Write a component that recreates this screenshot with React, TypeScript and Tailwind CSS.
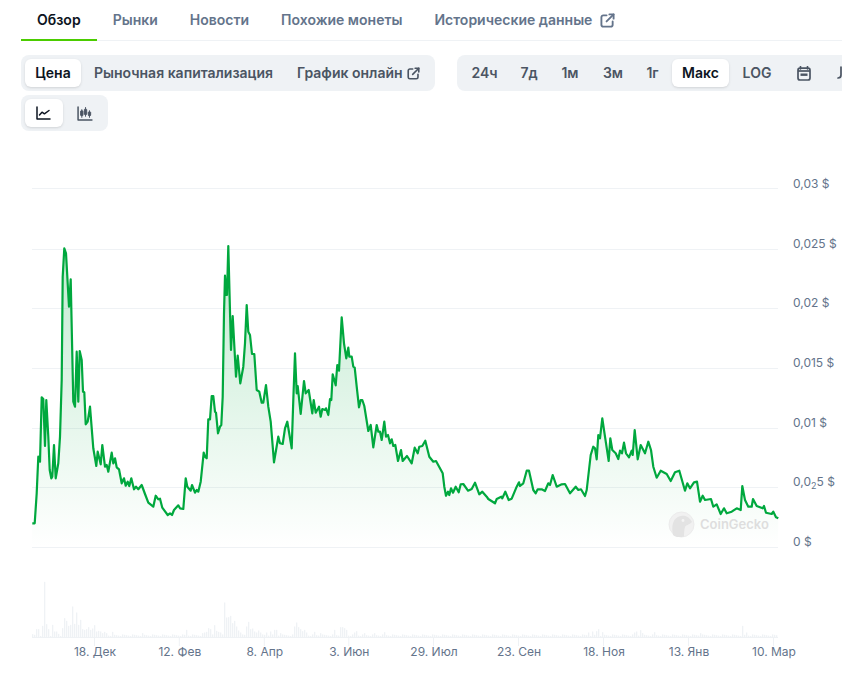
import React from 'react'

// points traced from the chart, grouped by the part of the picture they came from
const z3: number[][] = [[97,880],[104,880],[110,790],[115,680],[120,695],[125,502],[130,507],[135,648],[139,510],[145,620],[149,720],[154,745],[157,740],[162,645],[167,745],[175,700],[180,620],[185,450],[188,140],[193,55],[198,70],[207,230],[212,148],[220,515],[225,530],[230,365],[235,515],[239,363],[245,390],[249,485],[253,487],[257,583],[263,575],[270,530],[280,655],[289,708],[293,665],[302,703],[307,645],[315,710],[320,705],[325,725],[335,668],[340,700],[345,685],[350,712],[357,718],[365,760],[372,745],[377,767],[383,755],[388,768],[394,745],[402,778],[408,770],[415,778],[425,765],[435,792],[445,818],[460,830],[467,797],[475,808],[480,806],[487,833],[503,855],[510,850],[516,855],[522,840],[535,826],[540,835],[550,837],[557,745],[562,770],[572,782],[576,765],[585,788],[590,780],[595,785],[602,755],[611,668],[615,680],[620,685],[625,568],[630,568],[635,498],[640,498],[645,545],[648,548],[654,610],[660,590],[664,585],[668,500],[672,250],[675,137],[679,195],[681,195],[685,48],[693,360],[698,258],[708,440],[713,377],[721,460],[730,410],[735,340],[740,225],[745,305],[750,315],[756,372],[763,372],[770,480],[778,485],[785,518],[790,518],[798,465],[805,530],[812,575]]
const z4: number[][] = [[12,487],[25,410],[30,430],[38,432],[45,385],[52,365],[65,445],[70,300],[75,160],[80,280],[83,258],[92,342],[102,243],[107,280],[116,270],[127,340],[131,300],[137,338],[147,320],[152,350],[157,327],[165,330],[168,325],[175,345],[180,297],[184,300],[188,223],[197,256],[202,195],[207,212],[215,52],[222,130],[229,175],[235,143],[238,170],[245,170],[250,200],[254,203],[260,260],[267,322],[272,300],[277,300],[283,318],[295,393],[302,375],[310,442],[320,375],[325,395],[330,395],[335,420],[343,365],[348,410],[354,405],[360,430],[365,418],[370,438],[376,435],[384,483],[393,450],[398,483],[411,468],[425,490],[434,443],[443,460],[448,440],[457,438],[466,422],[478,470],[490,485],[498,483],[518,520],[523,560],[528,587],[534,575],[538,585],[543,565],[549,578],[557,560],[566,577],[572,553],[580,552],[594,572],[605,567],[615,548],[628,583],[637,575],[650,590],[655,597],[675,610],[680,597],[694,590],[697,595],[706,575],[716,600],[725,596],[740,560],[747,547],[750,558],[760,550],[770,512],[777,512],[790,570],[797,580],[803,568],[815,568],[825,573],[835,550]]
const z5: number[][] = [[0,255],[8,225],[20,260],[35,253],[45,252],[60,280],[77,260],[85,270],[93,268],[105,288],[110,270],[122,165],[130,140],[135,145],[140,178],[145,105],[150,115],[157,55],[165,110],[176,183],[181,115],[187,150],[197,160],[205,177],[210,152],[216,160],[222,128],[228,160],[237,172],[245,152],[248,165],[254,90],[263,178],[272,135],[285,160],[295,125],[303,150],[310,200],[320,233],[332,212],[350,222],[362,243],[375,217],[388,212],[405,272],[412,250],[420,265],[432,247],[441,245],[450,305],[458,287],[465,300],[483,297],[490,320],[500,313],[512,342],[522,325],[530,340],[545,335],[560,325],[572,330],[577,258],[585,300],[595,320],[605,320],[609,297],[620,318],[638,325],[642,318],[648,338],[665,342],[670,335],[678,352],[685,355]]

const points = [
  ...z3.map(([x, y]) => [x / 3, y / 3 + 230]),
  ...z4.map(([x, y]) => [x / 3 + 270, y / 3 + 300]),
  ...z5.map(([x, y]) => [x / 3 + 550, y / 3 + 400]),
]
const line = points.map(([x, y], i) => `${i ? 'L' : 'M'}${x.toFixed(1)} ${y.toFixed(1)}`).join(' ')
const area = `${line} L778 547 L32 547 Z`

// tops of the taller volume bars
const peaks6: number[][] = [[97,193],[106,178],[115,178],[124,168],[130,36],[136,145],[140,163],[146,178],[154,165],[160,185],[166,185],[172,192],[184,175],[190,138],[194,145],[199,153],[203,168],[208,178],[212,165],[217,110],[221,162],[226,84],[229,128],[233,165],[238,150],[244,178],[250,180],[256,178],[262,172],[268,180],[274,176],[280,166],[286,185],[292,183],[298,185],[304,190],[310,186],[316,190],[334,186],[428,190],[560,180],[604,190],[612,188],[620,186],[626,175],[632,178],[642,166],[648,183],[654,186],[660,188],[670,98],[676,72],[680,143],[686,142],[691,138],[695,160],[700,153],[705,165],[710,170],[716,182],[722,188],[736,170],[741,163],[745,156],[750,178],[754,176],[760,185],[766,188],[772,182],[780,188],[800,188],[810,185],[820,180],[830,180],[840,190],[880,170],[886,126],[890,158],[896,172],[902,178],[908,184],[914,180],[920,188],[940,186],[960,190],[1000,180],[1020,172],[1026,172],[1032,175],[1040,180],[1060,188],[1066,184],[1090,190],[1120,190],[1152,187]]
const peaks7: number[][] = [[505,188],[515,185],[525,184],[535,178],[545,187],[640,188],[650,185],[658,181],[665,190],[702,187],[840,190],[967,168],[975,188]]

const bars = new Map<number, number>()
for (let x = 32; x < 778; x += 2) {
  bars.set(x, 1.5 + ((x * 7) % 5) * 0.4)
}
const putBar = (x: number, h: number) => {
  const slot = 32 + Math.round((x - 32) / 2) * 2
  if (bars.has(slot)) bars.set(slot, h)
}
peaks6.forEach(([x, y]) => putBar(x / 3, (203 - y) / 3))
peaks7.forEach(([x, y]) => putBar(x / 3 + 420, (203 - y) / 3))

const gridLines = [188, 249, 308, 368, 428, 487, 547]
const yLabels = [
  { y: 188, text: '0,03 $' },
  { y: 248, text: '0,025 $' },
  { y: 307, text: '0,02 $' },
  { y: 367, text: '0,015 $' },
  { y: 427, text: '0,01 $' },
  { y: 546, text: '0 $' },
]
const xLabels = [
  { x: 94.5, text: '18. Дек' },
  { x: 179.3, text: '12. Фев' },
  { x: 264.3, text: '8. Апр' },
  { x: 348.8, text: '3. Июн' },
  { x: 433.5, text: '29. Июл' },
  { x: 518.5, text: '23. Сен' },
  { x: 603.5, text: '18. Ноя' },
  { x: 688.5, text: '13. Янв' },
  { x: 773.5, text: '10. Мар' },
]

const LinkIcon = ({ size }: { size: number }) => (
  <svg width={size} height={size} viewBox="0 0 16 16" fill="none" stroke="currentColor" strokeWidth="2" strokeLinecap="round" strokeLinejoin="round">
    <path d="M7 2.5H3.5a2 2 0 0 0-2 2v8a2 2 0 0 0 2 2h8a2 2 0 0 0 2-2V9" />
    <path d="M10 1.5h4.5V6" />
    <path d="M14.5 1.5 7 9" />
  </svg>
)

const LineIcon = () => (
  <svg width="15" height="14" viewBox="0 0 15 14" fill="none" stroke="currentColor" strokeWidth="1.5" strokeLinecap="round" strokeLinejoin="round">
    <path d="M1 1v12h13" />
    <path d="M3.5 9 6 6.2l2.4 1.6L13 4.5" />
  </svg>
)

const CandleIcon = () => (
  <svg width="16" height="15" viewBox="0 0 15 14" fill="none">
    <path d="M1 1v12h13" stroke="currentColor" strokeWidth="1.4" strokeLinecap="round" strokeLinejoin="round" />
    <g fill="currentColor" stroke="currentColor" strokeWidth="0.9">
      <path d="M4.5 3v8" />
      <rect x="3.4" y="4.5" width="2.2" height="4.5" rx="0.5" />
      <path d="M8 1v9" />
      <rect x="6.9" y="3" width="2.2" height="5" rx="0.5" />
      <path d="M11.7 4v7" />
      <rect x="10.6" y="5.5" width="2.2" height="3.5" rx="0.5" />
    </g>
  </svg>
)

const CalendarIcon = () => (
  <svg width="14" height="15" viewBox="0 0 14 15" fill="none">
    <path d="M3.5 0.5v2.5M10.5 0.5v2.5" stroke="currentColor" strokeWidth="1.6" strokeLinecap="round" />
    <rect x="1" y="2.2" width="12" height="11.8" rx="2" stroke="currentColor" strokeWidth="1.7" />
    <path d="M1 5h12" stroke="currentColor" strokeWidth="1.7" />
    <rect x="3.5" y="7.5" width="7" height="2.4" fill="currentColor" />
  </svg>
)

const Chart = () => {
  return (
    <svg width="842" height="552" viewBox="0 131 842 552" className="block font-['Inter',sans-serif]">
      <defs>
        <linearGradient id="fill" x1="0" y1="246" x2="0" y2="547" gradientUnits="userSpaceOnUse">
          <stop offset="0" stopColor="#00a83e" stopOpacity="0.24" />
          <stop offset="1" stopColor="#00a83e" stopOpacity="0" />
        </linearGradient>
      </defs>

      {gridLines.map((y) => (
        <rect key={y} x="32" y={y} width="746" height="1" fill="#eff2f5" />
      ))}

      {[...bars.entries()].map(([x, h]) => (
        <rect key={x} x={x} y={637.5 - h} width="1.3" height={h} fill="#eff2f5" />
      ))}
      <rect x="32" y="637" width="746" height="1" fill="#eff2f5" />
      {xLabels.map((l) => (
        <rect key={l.x} x={l.x - 0.5} y="637" width="1" height="9" fill="#eff2f5" />
      ))}

      <path d={area} fill="url(#fill)" />
      <path d={line} fill="none" stroke="#00a83e" strokeWidth="2.2" strokeLinejoin="round" />

      {/* watermark */}
      <circle cx="681.5" cy="524.5" r="12.5" fill="#f1f1f1" stroke="#ececec" strokeWidth="1" />
      <path d="M673 535 C671 526 673 517 681 516 C686 515 690 518 692 522 C689 525 686 525 685 527 C684 531 684 534 684 536.5 C680 537.5 676 537.5 673 535 Z" fill="#e3e3e3" />
      <circle cx="683" cy="520.5" r="1.4" fill="#f4f4f4" />
      <text x="700" y="529" fontSize="13" fontWeight="600" fill="#dedede">CoinGecko</text>

      {yLabels.map((l) => (
        <text key={l.text} x="793" y={l.y} fontSize="12" fill="#64748b">{l.text}</text>
      ))}
      <text x="793" y="486" fontSize="12" fill="#64748b">
        0,0<tspan fontSize="9" dy="3">2</tspan><tspan dy="-3">5 $</tspan>
      </text>

      {xLabels.map((l) => (
        <text key={l.text} x={l.x + 0.5} y="656" fontSize="12" textAnchor="middle" fill="#64748b">{l.text}</text>
      ))}
    </svg>
  )
}

const App = () => {
  return (
    <div className="w-[842px] h-[683px] overflow-hidden bg-white font-['Inter',sans-serif]">
      <div className="ml-[21px] h-[41px] flex border-b border-[#eff2f5] text-sm font-semibold text-[#64748b]">
        <div className="px-4 h-[41px] flex items-center text-[#0d1421] border-b-2 border-[#4bcc00]">Обзор</div>
        <div className="px-4 flex items-center">Рынки</div>
        <div className="px-4 flex items-center">Новости</div>
        <div className="px-4 flex items-center">Похожие монеты</div>
        <div className="px-4 flex items-center gap-2">
          Исторические данные
          <LinkIcon size={15} />
        </div>
      </div>

      <div className="ml-[21px] mt-3.5 flex gap-[22px] text-sm font-semibold text-[#4b5563] w-[900px]">
        <div className="h-9 w-[414px] shrink-0 p-1 flex rounded-lg bg-[#eff2f5]">
          <div className="w-14 flex items-center justify-center rounded-md bg-white text-[#0d1421] shadow-sm">Цена</div>
          <div className="px-[13px] flex items-center">Рыночная капитализация</div>
          <div className="pl-[11px] flex items-center gap-1">
            График онлайн
            <LinkIcon size={13} />
          </div>
        </div>
        <div className="h-9 w-[420px] shrink-0 p-1 flex rounded-l-lg bg-[#eff2f5]">
          <div className="w-[47px] flex items-center justify-center">24ч</div>
          <div className="w-[42px] flex items-center justify-center">7д</div>
          <div className="w-[40px] flex items-center justify-center">1м</div>
          <div className="w-[46px] flex items-center justify-center">3м</div>
          <div className="w-[33px] flex items-center justify-center">1г</div>
          <div className="ml-[3px] w-[57px] flex items-center justify-center rounded-md bg-white text-[#0d1421] shadow-sm">Макс</div>
          <div className="w-[56px] flex items-center justify-center">LOG</div>
          <div className="w-[37px] flex items-center justify-center">
            <CalendarIcon />
          </div>
          <div className="ml-[15px] flex items-center">
            <svg width="10" height="14" viewBox="0 0 10 14" fill="none" stroke="currentColor" strokeWidth="1.7" strokeLinecap="round">
              <path d="M4 1v8c0 2-1 3-3 3" />
            </svg>
          </div>
        </div>
      </div>

      <div className="ml-[21px] mt-1 w-[87px] h-9 p-1 flex rounded-lg bg-[#eff2f5] text-[#4b5563]">
        <div className="w-[38px] pr-0.5 flex items-center justify-center rounded-md bg-white text-[#0d1421] shadow-sm">
          <LineIcon />
        </div>
        <div className="w-[41px] pl-0.5 flex items-center justify-center">
          <CandleIcon />
        </div>
      </div>

      <Chart />
    </div>
  )
}

export default App
